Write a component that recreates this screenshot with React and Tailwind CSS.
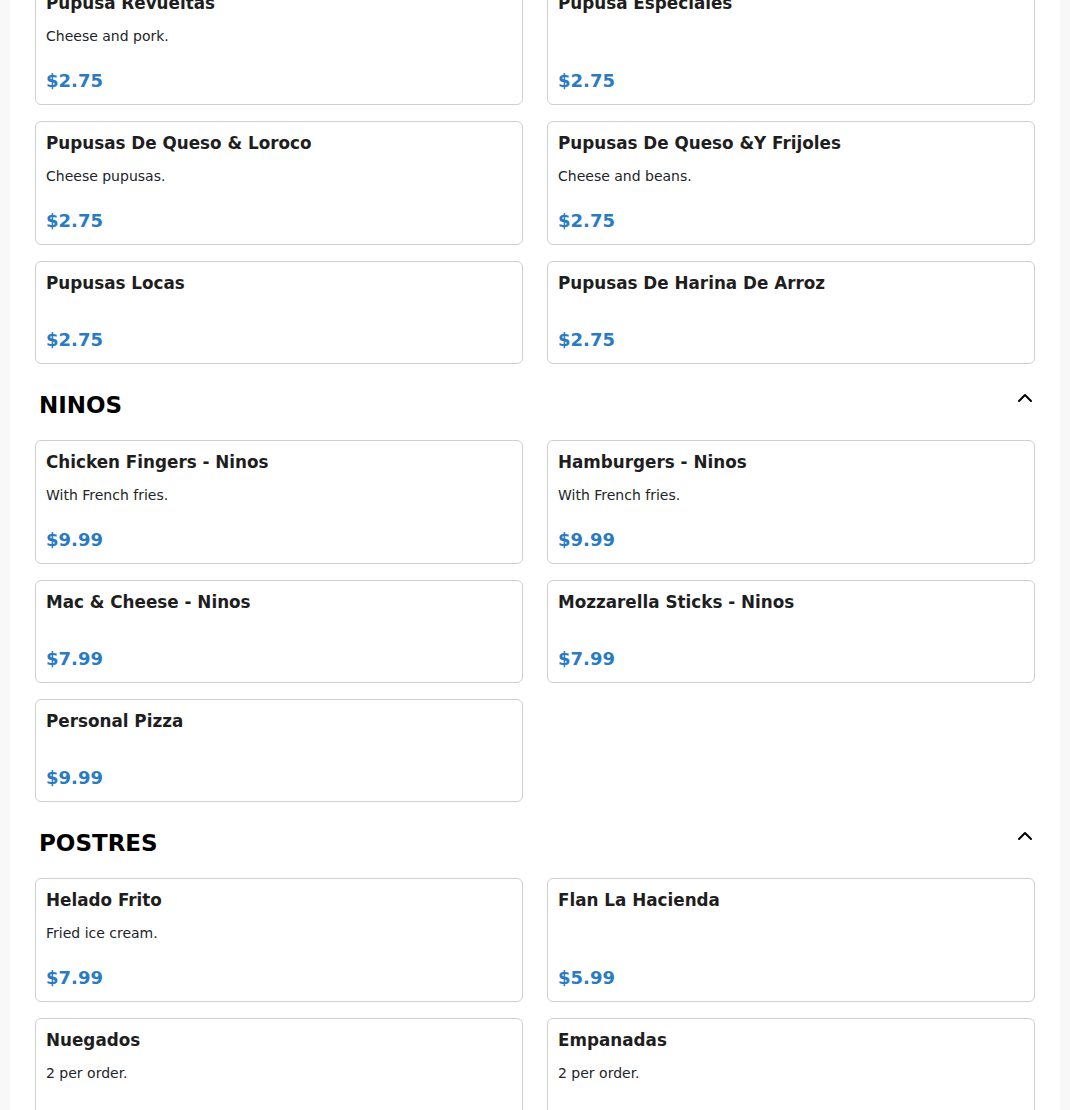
import React from "react";

const sections = [
  {
    title: null,
    items: [
      { name: "Pupusa Revueltas", desc: "Cheese and pork.", price: "$2.75" },
      { name: "Pupusa Especiales", price: "$2.75" },
      { name: "Pupusas De Queso & Loroco", desc: "Cheese pupusas.", price: "$2.75" },
      { name: "Pupusas De Queso &Y Frijoles", desc: "Cheese and beans.", price: "$2.75" },
      { name: "Pupusas Locas", price: "$2.75" },
      { name: "Pupusas De Harina De Arroz", price: "$2.75" },
    ],
  },
  {
    title: "NINOS",
    items: [
      { name: "Chicken Fingers - Ninos", desc: "With French fries.", price: "$9.99" },
      { name: "Hamburgers - Ninos", desc: "With French fries.", price: "$9.99" },
      { name: "Mac & Cheese - Ninos", price: "$7.99" },
      { name: "Mozzarella Sticks - Ninos", price: "$7.99" },
      { name: "Personal Pizza", price: "$9.99" },
    ],
  },
  {
    title: "POSTRES",
    items: [
      { name: "Helado Frito", desc: "Fried ice cream.", price: "$7.99" },
      { name: "Flan La Hacienda", price: "$5.99" },
      { name: "Nuegados", desc: "2 per order.", price: "$3.99" },
      { name: "Empanadas", desc: "2 per order.", price: "$3.99" },
    ],
  },
];

function Card({ item }) {
  return (
    <div className="flex flex-col rounded-md border border-[#cfcfcf] bg-white px-[10px] pt-[11px] pb-[12px]">
      <h3 className="mb-[13px] text-[16.8px] font-bold leading-[20px] text-[#1e1e1e]">{item.name}</h3>
      {item.desc && <p className="text-[14px] leading-[21px] text-[#212529]">{item.desc}</p>}
      <div className="mt-auto pt-[23px] text-[18px] font-bold leading-[22px] text-[#2a7bc4]">{item.price}</div>
    </div>
  );
}

function Chevron() {
  return (
    <svg width="16" height="10" viewBox="0 0 16 10" className="mt-[2px] mr-[2px] text-black" fill="none">
      <path d="M2 8 L8 2 L14 8" stroke="currentColor" strokeWidth="2" strokeLinecap="round" strokeLinejoin="round" />
    </svg>
  );
}

export default function App() {
  return (
    <div className="min-h-screen bg-[#f8f8f8] px-[10px]" style={{ fontFamily: '"DejaVu Sans", sans-serif' }}>
      <div className="bg-white px-[25px] pb-[40px]">
        <div className="-mt-[19px]">
          {sections.map((s, i) => (
            <section key={i}>
              {s.title && (
                <div className="mt-[27px] mb-[21px] flex items-start justify-between pl-[4px]">
                  <h2 className="text-[23px] font-bold leading-[28px] text-black">{s.title}</h2>
                  <Chevron />
                </div>
              )}
              <div className="grid grid-cols-2 gap-x-6 gap-y-4">
                {s.items.map((it) => (
                  <Card key={it.name} item={it} />
                ))}
              </div>
            </section>
          ))}
        </div>
      </div>
    </div>
  );
}
